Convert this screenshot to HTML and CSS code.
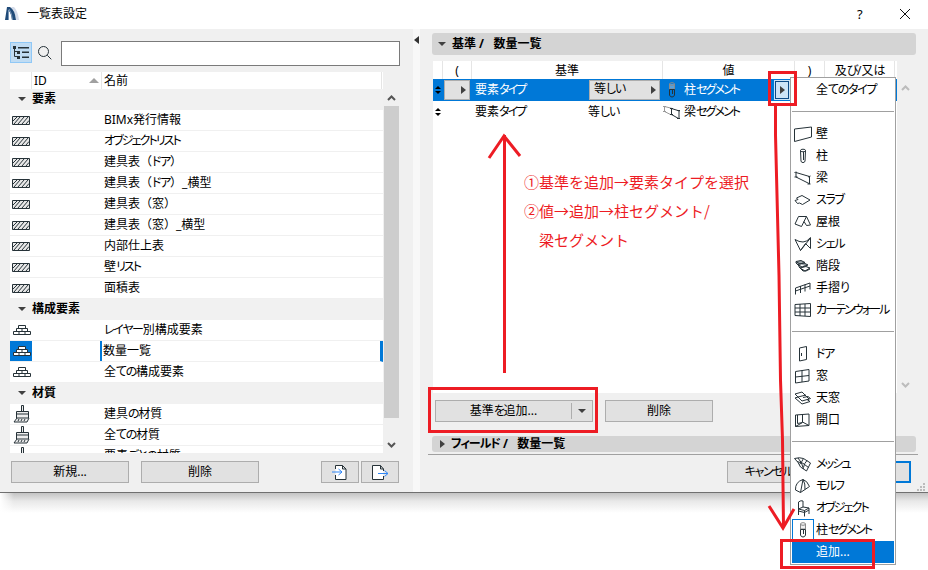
FILE: index.html
```
<!DOCTYPE html>
<html lang="ja">
<head>
  <meta charset="utf-8">
  <title>一覧表設定</title>
  <link rel="stylesheet" href="styles.css">
</head>
<body>
  <svg class="defs">
    <symbol id="hatch" viewBox="0 0 18 9">
      <path d="M.5 .5h17v8h-17z" fill="#e8e8e8"/>
      <path d="M1 5l4-4M2 8l6-7M6 8l6-7M10 8l6-7M14 8l3-3.500"/>
    </symbol>
    <symbol id="bricks" viewBox="0 0 18 12">
      <path d="M5.500 1.500h7v3h-7zM3.500 4.500h11v3h-11zM.5 7.500h17v3H.5zM9 4.500v3M6 7.500v3M12 7.500v3" fill="#fff"/>
    </symbol>
    <symbol id="brush" viewBox="0 0 18 20">
      <path d="M8.500 7V1.500h2V7M3.500 7.500h12v6.500h-12zM3.500 10h12M4 14l-3 4h13l2-4" fill="#eee"/>
      <path d="M5 17l1-2M8 17l1-2M11 17l1-2"/>
    </symbol>
    <symbol id="segment" viewBox="0 0 20 18">
      <path d="M7.500 3v5h5V3" stroke="#8a8a8a" fill="#ddd" fill-opacity=".4"/>
      <ellipse cx="10" cy="3" rx="2.500" ry="1.300" stroke="#8a8a8a" fill="none"/>
      <path d="M7.500 8.500h5V14q-.5 2-2.500 2t-2.500-2zM10.500 9v4" fill="none"/>
    </symbol>
  </svg>

  <div class="window">
    <header class="titlebar">
      <svg class="logo" width="15" height="15" viewBox="0 0 15 15">
        <path d="M6 1h3q4 4 5 13h-3Q10 5 6 1z" fill="#d5dcea" stroke="none"/>
        <path d="M0 14L2 1h3Q10 4 11 14H7Q6 7 4 5L3.500 14z" fill="#1f4a78" stroke="none"/>
        <path d="M3.500 14V4M7.500 14Q7 7 4 3" stroke="#7895b5" fill="none"/>
      </svg>
      <span class="title">一覧表設定</span>
      <span class="help">?</span>
      <svg width="12" height="12" viewBox="0 0 12 12"><path d="M1 1l10 10M11 1L1 11" stroke="#111"/></svg>
    </header>

    <main class="content">
      <section class="left">
        <div class="search">
          <div class="tree-toggle">
            <svg width="18" height="14" viewBox="0 0 18 14">
              <path d="M2.500 3v7.500H5M2.500 5.500H5" fill="none"/>
              <path d="M1 0h3v3H1zM5 5h3v3H5zM5 10h3v3H5zM6 1h11v1.500H6zM10 5.500h7V7h-7zM10 10.500h7V12h-7z" fill="#263238" stroke="none"/>
            </svg>
          </div>
          <svg width="16" height="16" viewBox="0 0 16 16"><circle cx="6.500" cy="6.500" r="5" fill="none"/><path d="M10.300 10.300l4 4"/></svg>
          <input type="text">
        </div>
        <div class="list">
          <div class="tree">
            <div class="tree-head"><span></span><span>ID<b class="sort"></b></span><span>名前</span></div>
            <div class="group"><b class="down"></b>要素</div>
            <div class="item"><svg class="h"><use href="#hatch"/></svg><span>BIMx発行情報</span></div>
            <div class="item"><svg class="h"><use href="#hatch"/></svg><span class="k tight">オブジェクトリスト</span></div>
            <div class="item"><svg class="h"><use href="#hatch"/></svg><span>建具表（<i class="k">ドア</i>）</span></div>
            <div class="item"><svg class="h"><use href="#hatch"/></svg><span>建具表（<i class="k">ドア</i>）_横型</span></div>
            <div class="item"><svg class="h"><use href="#hatch"/></svg><span>建具表（窓）</span></div>
            <div class="item"><svg class="h"><use href="#hatch"/></svg><span>建具表（窓）_横型</span></div>
            <div class="item"><svg class="h"><use href="#hatch"/></svg><span>内部仕上表</span></div>
            <div class="item"><svg class="h"><use href="#hatch"/></svg><span>壁<i class="k tight">リスト</i></span></div>
            <div class="item"><svg class="h"><use href="#hatch"/></svg><span>面積表</span></div>
            <div class="group"><b class="down"></b>構成要素</div>
            <div class="item"><svg class="l"><use href="#bricks"/></svg><span><i class="k">レイヤー</i>別構成要素</span></div>
            <div class="item selected"><svg class="l"><use href="#bricks"/></svg><span>数量一覧</span></div>
            <div class="item"><svg class="l"><use href="#bricks"/></svg><span>全<i class="k">ての</i>構成要素</span></div>
            <div class="group"><b class="down"></b>材質</div>
            <div class="item"><svg class="b"><use href="#brush"/></svg><span>建具<i class="k">の</i>材質</span></div>
            <div class="item"><svg class="b"><use href="#brush"/></svg><span>全<i class="k">ての</i>材質</span></div>
            <div class="item"><svg class="b"><use href="#brush"/></svg><span>要素<i class="k">ごとの</i>材質</span></div>
          </div>
          <div class="scrollbar">
            <svg width="9" height="6" viewBox="0 0 9 6"><path d="M1 5l3.500-3.500L8 5"/></svg>
            <div class="thumb"></div>
            <svg width="9" height="6" viewBox="0 0 9 6"><path d="M1 1l3.500 3.500L8 1"/></svg>
          </div>
        </div>
        <div class="left-buttons">
          <button class="wide">新規...</button>
          <button class="wide">削除</button>
          <button class="small">
            <svg width="18" height="17" viewBox="0 0 18 17"><path d="M4.500 5V1.500h7l3.500 3.500v10.500H4.500V11M11.500 1.500V5H15" fill="#fff"/><path d="M1 8h10M7.500 5l3.500 3-3.500 3" stroke="#2f86f6" fill="none"/></svg>
          </button>
          <button class="small">
            <svg width="18" height="17" viewBox="0 0 18 17"><path d="M12.500 12v3.500h-11v-14h8l3 3.500v2M9.500 1.500V5h3" fill="#fff"/><path d="M7 9.500h10M13.500 6.500l3.500 3-3.500 3" stroke="#2f86f6" fill="none"/></svg>
          </button>
        </div>
      </section>

      <div class="splitter"><b class="back"></b></div>

      <section class="right">
        <div class="panel-head"><b class="down"></b>基準 /&nbsp;&nbsp; 数量一覧</div>
        <div class="table-wrap">
          <div class="table">
            <div class="row head"><span></span><span>(</span><span>基準</span><span>値</span><span>)</span><span class="andor">及<i class="k">び</i>/又<i class="k">は</i></span></div>
            <div class="row active">
              <span class="spin"><b></b><b></b></span>
              <span class="combo"><b class="next"></b></span>
              <span class="type">要素<i class="k tight">タイプ</i></span>
              <span class="combo op"><em>等<i class="k">しい</i></em><b class="next"></b></span>
              <span class="val"><svg width="20" height="18"><use href="#segment"/></svg>柱<i class="k tight">セグメント</i></span>
              <span class="pick"><b class="next"></b></span>
            </div>
            <div class="row">
              <span class="spin"><b></b><b></b></span>
              <span></span>
              <span class="type">要素<i class="k tight">タイプ</i></span>
              <span class="op-text">等<i class="k">しい</i></span>
              <span class="val"><svg width="20" height="18" viewBox="0 0 20 18"><path d="M2.500 3.500v5l7 3.500M2.500 3.500l8 2M1 3.500h3M1 8.500h3" stroke="#999" fill="none"/><path d="M9.500 5.500v6l7 4M9.500 5.500l8 2.500M8 5.500h3M8 11.500h3M17 7.500v8M15 7.500h3M15 15.500h3" fill="none"/></svg>梁<i class="k tight">セグメント</i></span>
            </div>
          </div>
          <div class="side">
            <svg width="9" height="6" viewBox="0 0 9 6"><path d="M1 5l3.500-3.500L8 5"/></svg>
            <svg width="9" height="6" viewBox="0 0 9 6"><path d="M1 1l3.500 3.500L8 1"/></svg>
          </div>
        </div>
        <div class="actions">
          <button class="add"><span>基準<i class="k">を</i>追加...</span><b class="down"></b></button>
          <button class="del">削除</button>
        </div>
        <div class="panel-head fields"><b class="next"></b><i class="k">フィールド</i>&nbsp;/&nbsp;&nbsp; 数量一覧</div>
        <div class="footer">
          <button class="cancel"><i class="k">キャンセル</i></button>
          <button class="ok"></button>
          <svg class="grip" width="9" height="9" viewBox="0 0 9 9"><path d="M6 0h2v2H6zM3 3h2v2H3zM6 3h2v2H6zM0 6h2v2H0zM3 6h2v2H3zM6 6h2v2H6z" fill="#bcbcbc" stroke="none"/></svg>
        </div>
      </section>
    </main>
  </div>
  <div class="shadow"></div>

  <ul class="menu">
    <li class="first">全<i class="k">てのタイプ</i></li>
    <li class="sep"></li>
    <li><svg viewBox="0 0 20 18"><path d="M1.500 4l17-2v10l-17 4.500z"/></svg>壁</li>
    <li><svg viewBox="0 0 20 18"><ellipse cx="10" cy="3.500" rx="2.500" ry="1.300"/><path d="M7.500 3.500l.5 11q2 2.500 4 0l.5-11M10.500 5v8"/></svg>柱</li>
    <li><svg viewBox="0 0 20 18"><path d="M3 3.500v4.500l13 6.500M3 3.500l13.500 4v7.500M1.500 3.500l2-.5M1.500 8h3M15 8l2.500-1M14.500 15h3"/></svg>梁</li>
    <li><svg viewBox="0 0 20 18"><path d="M2 9.500l3-1-1.500-1.500L9 4.500l8 4.500-7.500 4.500-3-1.500-2 .5z"/></svg><i class="k">スラブ</i></li>
    <li><svg viewBox="0 0 20 18"><path d="M2 11l3.500-7.500h8L8.500 13.500zM13.500 3.500l4 8.500-4 .5-2.500-4"/></svg>屋根</li>
    <li><svg viewBox="0 0 20 18"><path d="M2 4.500q4 2.500 8 2.500t7.500-4.500v11l-5-5-5 7zM7.500 15.500L17.500 3"/></svg><i class="k">シェル</i></li>
    <li><svg viewBox="0 0 20 18"><path d="M3 4.500l5-1 4 2-5 1.500zM5 7.500l6-1.500 4 2-6 2zM7 11l6-1.500 4 1.500-5 3zM3 4.500v1.500l3 3v1l4 4h3l4-2" fill="#9ba5aa"/></svg>階段</li>
    <li><svg viewBox="0 0 20 18"><path d="M2.500 15.500V9l14.500-5v6.500M2.500 12l14.500-5M7.500 7v7M12 5.500v7"/></svg>手摺<i class="k">り</i></li>
    <li><svg viewBox="0 0 20 18"><path d="M2 3.500l15.500-1v13L2 14.500zM7 3v12M12 3v12M2 7h15.500M2 11h15.500"/></svg><i class="k tight">カーテンウォール</i></li>
    <li class="sep"></li>
    <li><svg viewBox="0 0 20 18"><path d="M6.500 3l7-1.500v13l-7 1.500zM8.500 8v3"/></svg><i class="k">ドア</i></li>
    <li><svg viewBox="0 0 20 18"><path d="M2.500 4.500l13.500-2v11.500l-13.500 2zM9 3.500v11.500M2.500 10l13.500-1.500"/></svg>窓</li>
    <li><svg viewBox="0 0 20 18"><path d="M2 5l7-2 7 7-7 2zM5 8l8-2M2 9l3-1M2 9l7 6 8-2.500-3-2M10 8.500l5-1 2.500 2-3 1"/></svg>天窓</li>
    <li><svg viewBox="0 0 20 18"><path d="M2.500 4l13.500-1v11.500l-13.500 1zM9.500 3.500V11l6.500 3.500M9.500 11.500l-7 4M4.500 4v8.500l5-1"/></svg>開口</li>
    <li class="sep"></li>
    <li><svg viewBox="0 0 20 18"><path d="M1.500 3.500q5-1.500 9 0l7 4.500-4 8-6-4q-2-5-6-8.500zM5 3q4 4 5.500 11M10.500 3.500q-2 4-4 6M14 5.500q-3 3-3.500 7M4 6.500q6 .5 11.500 6"/></svg><i class="k tight">メッシュ</i></li>
    <li><svg viewBox="0 0 20 18"><path d="M2.500 13Q2 5 10 2.500L7.500 15.500zM10 2.500q4 1 6.500 7l-9 6M10 2.500q2.500 4 2 10"/></svg><i class="k tight">モルフ</i></li>
    <li><svg viewBox="0 0 20 18"><path d="M5.500 16V3q2.500-2 4.500-1v6M5.500 10l4.500-2 6 1-4.500 2.500zM5.500 10v2l6 1.500v4M16 9v6M11.500 11.500v2l4.500-2.500"/></svg><i class="k tight">オブジェクト</i></li>
    <li class="checked"><svg><use href="#segment"/></svg>柱<i class="k tight">セグメント</i></li>
    <li class="hover">追加...</li>
  </ul>

  <p class="note">①基準を追加→要素タイプを選択<br>②値→追加→柱セグメント/<br>　梁セグメント</p>
  <svg class="marks" viewBox="0 0 928 570">
    <path d="M769.500 72.500h26v32h-26zM429.500 388.500h167v43h-167zM781.500 540.500h92v27h-92z"/>
    <path d="M504.500 373V135M489 158l15-22 16 20"/>
    <path d="M775.500 106v29l1.500 60 2 80 1.500 105 2 60 1 87M769 506l14 22 11-19"/>
  </svg>
</body>
</html>
```
FILE: styles.css
```
* {
  box-sizing: border-box;
}

body {
  margin: 0;
  width: 928px;
  height: 570px;
  position: relative;
  overflow: hidden;
  background: #fff;
  color: #000;
  font: 12px/20px "Noto Sans", "Noto Sans CJK JP", sans-serif;
}

.defs {
  display: none;
}

svg {
  stroke: #263238;
  stroke-width: 1;
  flex: none;
}

i, em {
  font-style: normal;
}

/* proportional kana */
.k {
  font-feature-settings: "palt";
  letter-spacing: -1.3px;
}

.tight {
  letter-spacing: -1.9px;
}

.window {
  height: 493px;
  background: #f0f0f0;
  border-bottom: 1px solid #707070;
}

.titlebar {
  display: flex;
  align-items: center;
  height: 29px;
  padding: 0 17px 2px 5px;
  background: #fff;
}

.title {
  flex: 1;
  margin-left: 7px;
}

.help {
  width: 42px;
  font-size: 13px;
}

.content {
  display: flex;
  height: 463px;
}

/* triangles */
.down, .next, .back, .sort {
  display: block;
  width: 0;
  height: 0;
  border: 4px solid transparent;
}

.down {
  border-top-color: #404040;
  border-bottom: 0;
}

.next {
  border-left: 5px solid #404040;
  border-right: 0;
}

.back {
  border-right: 5px solid #333;
  border-left: 0;
}

.sort {
  border-width: 0 5px 5px;
  border-bottom-color: #a0a0a0;
}

button {
  display: flex;
  align-items: center;
  justify-content: center;
  height: 22px;
  padding: 0;
  border: 1px solid #adadad;
  background: #e1e1e1;
  color: #000;
  font: inherit;
}

/* left pane */
.left {
  width: 413px;
  padding: 12px 13px 0 10px;
}

.search {
  display: flex;
  align-items: flex-start;
}

.tree-toggle {
  display: flex;
  align-items: center;
  justify-content: center;
  width: 22px;
  height: 21px;
  margin-right: 5px;
  margin-top: 1px;
  border: 1px solid #90c8f6;
  background: #c0dcf3;
}

.search > svg {
  margin-top: 4px;
}

input {
  width: 339px;
  height: 25px;
  margin-left: auto;
  border: 1px solid #7a7a7a;
  background: #fff;
}

.list {
  display: flex;
  height: 381px;
  margin-top: 6px;
}

.tree {
  width: 374px;
  overflow: hidden;
  background: #fff;
  border-right: 1px solid #f0f0f0;
}

.tree-head {
  display: flex;
  height: 17px;
  line-height: 17px;
}

.tree-head span {
  border-right: 1px solid #e5e5e5;
  width: 22px;
}

.tree-head span:nth-child(2) {
  display: flex;
  align-items: center;
  justify-content: space-between;
  width: 70px;
  padding: 0 2px;
}

.tree-head span:nth-child(3) {
  width: 280px;
  padding-left: 2px;
}

.group {
  display: flex;
  align-items: center;
  height: 21px;
  padding: 0 0 2px 8px;
  background: #f1f1f1;
  font-weight: bold;
}

.group .down {
  margin-right: 6px;
}

.item {
  display: flex;
  align-items: center;
  height: 21px;
  border-bottom: 1px solid #f0f0f0;
}

.item svg {
  width: 18px;
  margin: 0 72px 0 2px;
}

.item span {
  margin-left: 2px;
}

.item .h {
  height: 9px;
}

.item .l {
  height: 12px;
  margin-left: 3px;
  margin-right: 71px;
}

.item .b {
  height: 20px;
  margin-left: 3px;
  margin-right: 71px;
}

.item.selected {
  background: linear-gradient(90deg, #0078d7 22px, #fff 22px);
  border-right: 3px solid #0078d7;
}

.item.selected span {
  margin-left: -2px;
  padding-left: 1px;
  border-left: 2px solid #0078d7;
}

.scrollbar {
  display: flex;
  flex-direction: column;
  align-items: center;
  justify-content: space-between;
  width: 15px;
  padding: 23px 0 5px;
}

.scrollbar svg {
  stroke: #555;
  stroke-width: 2;
  fill: none;
}

.thumb {
  width: 15px;
  height: 312px;
  margin: 5px 0 24px;
  background: #cdcdcd;
}

.left-buttons {
  display: flex;
  margin-top: 8px;
  padding: 0 1px;
}

.wide {
  width: 118px;
  margin-right: 12px;
}

.small {
  width: 38px;
  margin-left: 2px;
}

.wide + .small {
  margin-left: auto;
}

.splitter {
  width: 7px;
  padding: 7px 0 0 1px;
  background: #f8f8f8;
}

/* right pane */
.right {
  flex: 1;
  padding-top: 4px;
}

.panel-head {
  display: flex;
  align-items: center;
  width: 484px;
  height: 22px;
  margin-left: 12px;
  padding-left: 6px;
  border-radius: 3px;
  background: #d4d4d4;
  font-weight: bold;
}

.panel-head b {
  margin-right: 6px;
}

.table-wrap {
  display: flex;
  height: 332px;
  margin: 6px 0 0 13px;
}

.table {
  width: 464px;
  background: #fff;
}

.row {
  display: flex;
  align-items: center;
  height: 22px;
}

.head {
  height: 18px;
  line-height: 20px;
}

.head span {
  height: 18px;
  text-align: center;
  border-right: 1px solid #e5e5e5;
}

.head span:nth-child(1) { width: 10px; }
.head span:nth-child(2) { width: 29px; }
.head span:nth-child(3) { width: 191px; }
.head span:nth-child(4) { width: 132px; }
.head span:nth-child(5) { width: 30px; }
.head span:nth-child(6) { width: 70px; }

.active {
  background: #0078d7;
  color: #fff;
}

.spin {
  display: flex;
  flex-direction: column;
  gap: 2px;
  width: 11px;
  padding-left: 2px;
}

.spin b {
  width: 0;
  border: 3px solid transparent;
  border-top: 0;
  border-bottom: 3px solid #000;
}

.spin b + b {
  transform: rotate(180deg);
}

.spin + span {
  width: 26px;
}

.combo {
  display: flex;
  align-items: center;
  justify-content: flex-end;
  height: 20px;
  padding-right: 3px;
  border: 1px solid #adadad;
  background: #e1e1e1;
  color: #000;
}

.type {
  width: 113px;
  margin-left: 5px;
}

.op {
  width: 71px;
  margin-left: 1px;
}

.op em {
  flex: 1;
  padding-left: 4px;
  line-height: 16px;
  height: 18px;
}

.op-text {
  width: 72px;
}

.val {
  display: flex;
  align-items: center;
  width: 111px;
  padding-left: 2px;
}

.val svg {
  margin-right: 2px;
}

.pick {
  display: flex;
  align-items: center;
  justify-content: center;
  width: 14px;
  height: 18px;
  margin-left: 4px;
  border: 1px solid #0a4a86;
  outline: 1px solid #cce4f7;
  background: #cce4f7;
}

.side {
  display: flex;
  flex-direction: column;
  justify-content: space-between;
  padding: 24px 0 5px 4px;
}

.side svg {
  stroke: #bcbcbc;
  stroke-width: 2;
  fill: none;
}

.actions {
  display: flex;
  gap: 12px;
  margin: 7px 0 0 15px;
}

.add {
  width: 158px;
}

.add span {
  width: 136px;
  height: 16px;
  line-height: 15px;
  border-right: 1px solid #adadad;
  text-align: center;
}

.add .down {
  margin: 0 6px;
}

.del {
  width: 108px;
}

.fields {
  height: 16px;
  margin-top: 14px;
}

.fields .next {
  margin-left: 2px;
}

.fields .k {
  letter-spacing: -1px;
}

.footer {
  position: relative;
  display: flex;
  width: 490px;
  margin: 2px 0 0 8px;
  padding: 6px 7px 0 0;
  border-top: 1px solid #a0a0a0;
  justify-content: flex-end;
  gap: 8px;
}

.cancel {
  width: 88px;
  padding-right: 5px;
}

.ok {
  width: 88px;
  border: 2px solid #0078d7;
}

.grip {
  position: absolute;
  right: -8px;
  top: 28px;
}

.shadow {
  height: 20px;
  background:
    linear-gradient(90deg, #fff, rgba(255,255,255,0) 14px),
    linear-gradient(#c4c4c4, #e8e8e8 40%, #fff);
}

/* popup menu */
.menu {
  position: absolute;
  left: 790px;
  top: 77px;
  width: 106px;
  height: 488px;
  margin: 0;
  padding: 1px;
  list-style: none;
  white-space: nowrap;
  border: 1px solid #a0a0a0;
  background: #fff;
}

.menu li {
  display: flex;
  align-items: center;
  height: 22px;
}

.menu svg {
  width: 20px;
  height: 18px;
  margin: 0 3px 0 1px;
  fill: none;
}

.menu .first, .menu .hover {
  padding-left: 24px;
}

.menu .sep {
  background: linear-gradient(#a0a0a0, #a0a0a0) 0 10px / 100% 1px no-repeat;
}

.menu .checked svg {
  width: 22px;
  height: 22px;
  margin: 0 2px 0 0;
  padding: 1px 0;
  border: 1px solid #0078d7;
}

.menu .hover {
  background: #0078d7;
  color: #fff;
}

/* red annotations */
.note {
  position: absolute;
  left: 524px;
  top: 167px;
  margin: 0;
  color: #ed1c24;
  font: 15px/29px "Noto Sans CJK JP", sans-serif;
}

.marks {
  position: absolute;
  left: 0;
  top: 0;
  width: 928px;
  height: 570px;
  fill: none;
  stroke: #ed1c24;
  stroke-width: 3;
}
```
